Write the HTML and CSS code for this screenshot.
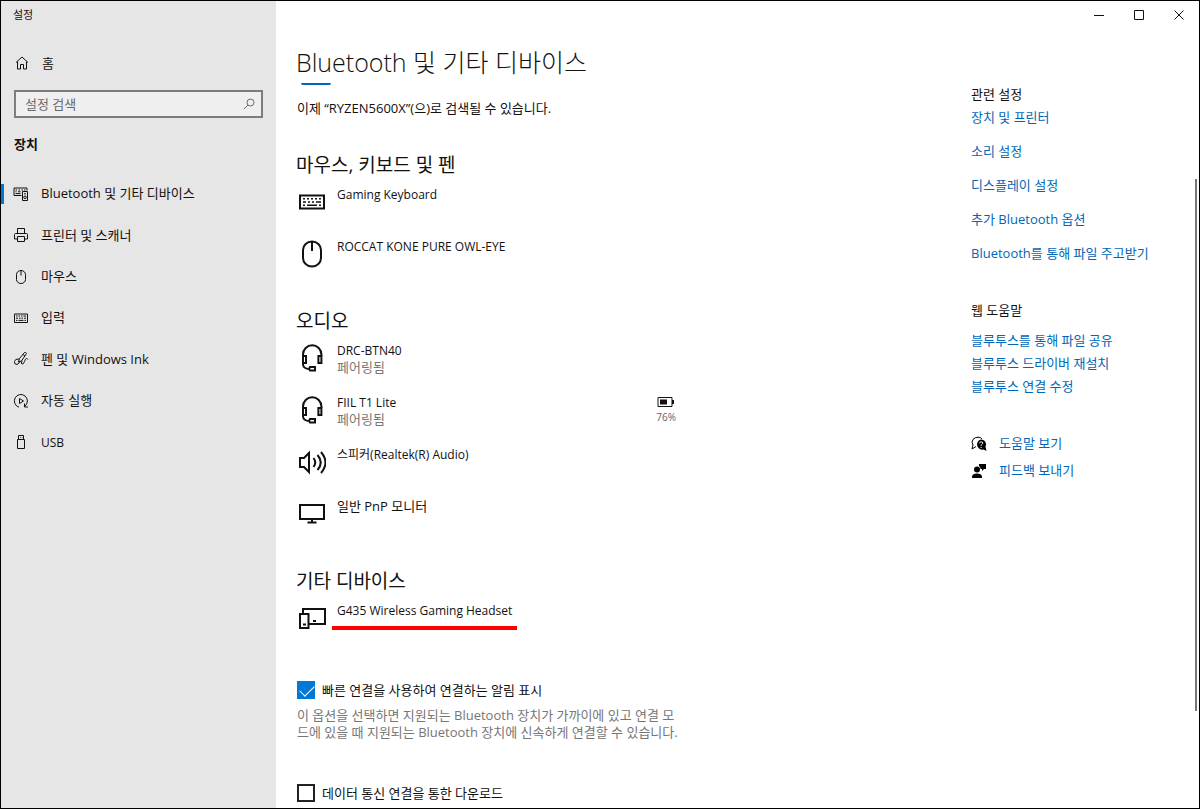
FILE: index.html
```
<!DOCTYPE html>
<html lang="ko">
<head>
  <meta charset="UTF-8">
  <meta name="viewport" content="width=device-width, initial-scale=1.0">
  <title>설정</title>
  <link rel="stylesheet" href="styles.css">
</head>
<body>
  <!-- Shared icons -->
  <svg class="sprite" aria-hidden="true">
    <symbol id="headset" viewBox="0 0 28 32">
      <path d="M5 14v-1.500a9.200 9.200 0 0 1 18.400 0V14M5 21v1.500q.5 4 5.500 4.500"/>
      <path d="M5 14h3v7H5zM20.400 14h3v7h-3zM12 25h5v3.500h-5l-1-1.500z"/>
    </symbol>
  </svg>

  <div class="window">
    <!-- Sidebar -->
    <aside class="sidebar">
      <div class="app-title">설정</div>
      <a class="home" href="#">
        <svg class="nav-icon" viewBox="0 0 16 16"><path d="M2 7.500 8 2l6 5.500M3.500 6.500V14h3V9.500h3V14h3V6.500"/></svg>
        <span>홈</span>
      </a>
      <div class="search">
        <input type="text" placeholder="설정 검색" aria-label="설정 검색">
        <svg viewBox="0 0 12 12"><circle cx="7.500" cy="4.500" r="3.500"/><path d="M5 7 1 11"/></svg>
      </div>
      <h2 class="sidebar-heading">장치</h2>
      <nav class="nav">
        <a class="nav-item active" href="#">
          <svg class="nav-icon" viewBox="0 0 16 16"><path d="M8.500 9.500H1V2h13v2.500M2.500 4h1.500M5.500 4H7M8.500 4H10M11 4h1.500M2.500 5.800h1M5 5.800h2.500M2.500 7.600h5"/><path d="M9.500 5.500h5v9h-5z"/><circle cx="12" cy="11.300" r="1.300"/><path d="M11 7.800h2"/></svg>
          <span>Bluetooth 및 기타 디바이스</span>
        </a>
        <a class="nav-item" href="#">
          <svg class="nav-icon" viewBox="0 0 16 16"><path d="M4.500 6.500v-5h7v5M4 12H1.500V7.500q0-1 1-1h11q1 0 1 1V12H12M4.500 9.500h7v5h-7z"/></svg>
          <span>프린터 및 스캐너</span>
        </a>
        <a class="nav-item" href="#">
          <svg class="nav-icon" viewBox="0 0 16 16"><path d="M3.500 5.500a4.500 4 0 0 1 9 0v5a4.500 4 0 0 1-9 0zM8 1.500v5"/></svg>
          <span>마우스</span>
        </a>
        <a class="nav-item" href="#">
          <svg class="nav-icon" viewBox="0 0 16 16"><path d="M1.500 4h13v8.500h-13zM3 6h1.500M5.500 6H7M8 6h1.500M10.500 6H13M3 8.200h2M6 8.200h1.500M8.500 8.200H10M11 8.200h2M3 10.400h1.500M5.500 10.400h5M11.500 10.400H13"/></svg>
          <span>입력</span>
        </a>
        <a class="nav-item" href="#">
          <svg class="nav-icon" viewBox="0 0 16 16"><path d="m5.500 11 1-3.500 5-6q1.500-.5 2 1L8.500 10zM10 3.500l2 1.500M6 8Q2 7.500 1.500 10.500T4 13.500q2-.5 3-3.500M9 10q-1.500 2.500 0 3t2.500-2.500 2-3T15 8.500"/></svg>
          <span>펜 및 Windows Ink</span>
        </a>
        <a class="nav-item" href="#">
          <svg class="nav-icon" viewBox="0 0 16 16"><path d="M6 14.200A6.500 6.500 0 1 1 12 13M11.500 10.500V14H15M6.500 5.500v5l4-2.500z"/></svg>
          <span>자동 실행</span>
        </a>
        <a class="nav-item" href="#">
          <svg class="nav-icon" viewBox="0 0 16 16"><path d="M5.500 5.500v-4h5v4M4.500 5.500h7v9h-7zM7 3.500h.500M8.800 3.500h.500"/></svg>
          <span class="latin">USB</span>
        </a>
      </nav>
    </aside>

    <div class="page">
      <div class="window-controls">
        <button type="button" aria-label="최소화"><svg viewBox="0 0 10 10"><path d="M0 5.500h10"/></svg></button>
        <button type="button" aria-label="최대화"><svg viewBox="0 0 10 10"><path d="M.5.5h9v9h-9z"/></svg></button>
        <button type="button" aria-label="닫기"><svg viewBox="0 0 10 10"><path d="m.5.500 9 9M9.500.5l-9 9"/></svg></button>
      </div>

      <div class="columns">
        <main class="main">
          <h1>Bluetooth 및 기타 디바이스</h1>
          <div class="add-device"></div>
          <p class="discover">이제 “RYZEN5600X”(으)로 검색될 수 있습니다.</p>

          <section class="group">
            <h2>마우스, 키보드 및 펜</h2>
            <ul>
              <li class="device">
                <svg class="device-icon" viewBox="0 0 28 32"><path d="M2 9.500h24v13H2z"/><path class="thin" d="M5 12.700h2M9 12.700h2M13 12.700h2M17 12.700h2M21 12.700h2M5 16h3M10 16h2M14 16h2M18 16h5M5 19.300h2M9 19.300h10M21 19.300h2"/></svg>
                <div class="device-text"><span class="latin">Gaming Keyboard</span></div>
              </li>
              <li class="device">
                <svg class="device-icon" viewBox="0 0 28 32"><path d="M5 12a9 8.500 0 0 1 18 0v8a9 8.500 0 0 1-18 0zM14 4v9"/></svg>
                <div class="device-text"><span class="latin">ROCCAT KONE PURE OWL-EYE</span></div>
              </li>
            </ul>
          </section>

          <section class="group">
            <h2>오디오</h2>
            <ul>
              <li class="device">
                <svg class="device-icon" viewBox="0 0 28 32"><use href="#headset"/></svg>
                <div class="device-text"><span class="latin">DRC-BTN40</span><span class="status">페어링됨</span></div>
              </li>
              <li class="device">
                <svg class="device-icon" viewBox="0 0 28 32"><use href="#headset"/></svg>
                <div class="device-text"><span class="latin">FIIL T1 Lite</span><span class="status">페어링됨</span></div>
                <div class="battery">
                  <svg viewBox="0 0 18 12"><path d="M1 1.500h14v9H1z"/><path class="fill" d="M3 3.500h7v5H3zM15 4h2v4h-2z"/></svg>
                  <span>76%</span>
                </div>
              </li>
              <li class="device">
                <svg class="device-icon" viewBox="0 0 28 32"><path d="M2 12h4l5-5v19l-5-5H2zM15.500 12q3.500 4.500 0 9M19.500 9q6.500 7.500 0 15M23 6q9 10.500 0 21"/></svg>
                <div class="device-text"><span class="latin">스피커(Realtek(R) Audio)</span></div>
              </li>
              <li class="device">
                <svg class="device-icon" viewBox="0 0 28 32"><path d="M2 7h24v14H2zM14 21v3.500M9.500 24.500h9"/></svg>
                <div class="device-text"><span>일반 PnP 모니터</span></div>
              </li>
            </ul>
          </section>

          <section class="group">
            <h2>기타 디바이스</h2>
            <ul>
              <li class="device">
                <svg class="device-icon" viewBox="0 0 28 32"><path d="M5 11V7h22v15H11M2 12h8.500v14H2zM5 22.500h3M15 19h3"/></svg>
                <div class="device-text"><span class="latin marked">G435 Wireless Gaming Headset</span></div>
              </li>
            </ul>
          </section>

          <div class="options">
            <label class="check"><input type="checkbox" checked><span>빠른 연결을 사용하여 연결하는 알림 표시</span></label>
            <p class="hint">이 옵션을 선택하면 지원되는 Bluetooth 장치가 가까이에 있고 연결 모<br>드에 있을 때 지원되는 Bluetooth 장치에 신속하게 연결할 수 있습니다.</p>
            <label class="check"><input type="checkbox"><span>데이터 통신 연결을 통한 다운로드</span></label>
          </div>
        </main>

        <aside class="related">
          <h3>관련 설정</h3>
          <ul class="settings-links">
            <li><a href="#">장치 및 프린터</a></li>
            <li><a href="#">소리 설정</a></li>
            <li><a href="#">디스플레이 설정</a></li>
            <li><a href="#">추가 Bluetooth 옵션</a></li>
            <li><a href="#">Bluetooth를 통해 파일 주고받기</a></li>
          </ul>
          <h3>웹 도움말</h3>
          <ul class="help-links">
            <li><a href="#">블루투스를 통해 파일 공유</a></li>
            <li><a href="#">블루투스 드라이버 재설치</a></li>
            <li><a href="#">블루투스 연결 수정</a></li>
          </ul>
          <ul class="support-links">
            <li>
              <svg viewBox="0 0 16 16"><path class="line" d="M5 10.500 1 13l1-4Q0 6 2 3.500T7 1.200Q9.500 1 11 3"/><path d="M10 3.500a5 5 0 0 1 4.500 7.200l1 4.300-3-1.500A5 5 0 1 1 10 3.500z"/><path class="mark" d="M8.500 7.300q.2-1.500 1.700-1.500t1.600 1.300q0 .8-.9 1.300t-.8 1.400M10.100 11v1"/></svg>
              <a href="#">도움말 보기</a>
            </li>
            <li>
              <svg viewBox="0 0 16 16"><circle cx="6" cy="6.500" r="3"/><path d="M1 15v-1.500Q1.500 10.500 6 10.500t5 3V15zM8 1h7v5h-2l-2 2V6H9.500Q9.500 4 8 3z"/></svg>
              <a href="#">피드백 보내기</a>
            </li>
          </ul>
        </aside>
      </div>
      <div class="scroll-thumb"></div>
    </div>
  </div>
</body>
</html>
```
FILE: styles.css
```
* {
  box-sizing: border-box;
}
body {
  margin: 0;
  font-family: "Open Sans", "Noto Sans CJK KR", sans-serif;
  font-size: 13px;
  line-height: 17px;
  color: #111;
}
h1, h2, h3, p, ul {
  margin: 0;
  padding: 0;
}
ul {
  list-style: none;
}
a {
  color: #0067b8;
  text-decoration: none;
}
svg {
  flex: none;
  fill: none;
  stroke: #111;
}
.sprite {
  position: absolute;
  width: 0;
  height: 0;
}
.latin {
  font-size: 12px;
}
.window {
  display: flex;
  height: 100vh;
  border: 1px solid #000;
  overflow: hidden;
  background: #fff;
}

/* Sidebar */
.sidebar {
  flex: none;
  width: 275px;
  background: #e6e6e6;
}
.sidebar a {
  color: #111;
}
.app-title {
  padding: 5px 12px;
  font-size: 11px;
}
.home {
  display: flex;
  align-items: center;
  gap: 12px;
  height: 34px;
  margin-top: 18px;
  padding-left: 13px;
}
.nav-icon {
  width: 16px;
  height: 16px;
}
.search {
  display: flex;
  align-items: center;
  height: 28px;
  margin: 10px 13px 0;
  padding: 0 6px 0 9px;
  border: 2px solid #7d7d7d;
  background: #efefef;
}
.search input {
  flex: 1;
  min-width: 0;
  padding: 0;
  border: none;
  outline: none;
  background: none;
  font: inherit;
}
.search input::placeholder {
  color: #6a6a6a;
}
.search svg {
  width: 12px;
  height: 12px;
  stroke: #6a6a6a;
}
.sidebar-heading {
  padding: 18px 13px 0;
  font-size: 13px;
  line-height: 17px;
}
.nav {
  display: flex;
  flex-direction: column;
  height: 290px;
  margin-top: 20px;
}
.nav-item {
  display: flex;
  flex: 1;
  align-items: center;
  gap: 12px;
}
.nav-item::before {
  content: "";
  width: 3px;
  height: 20px;
  margin-right: -3px;
}
.nav-item.active::before {
  background: #0078d7;
}

/* Page */
.page {
  position: relative;
  flex: 1;
  min-width: 0;
}
.window-controls {
  display: flex;
  justify-content: flex-end;
}
.window-controls button {
  display: flex;
  align-items: center;
  justify-content: center;
  width: 40px;
  height: 27px;
  padding: 0;
  border: none;
  background: none;
}
.window-controls svg {
  width: 10px;
  height: 10px;
}
.columns {
  display: flex;
  justify-content: space-between;
}
.main {
  flex: 0 1 410px;
  padding: 16px 0 0 20px;
}
h1 {
  font-size: 25px;
  font-weight: 300;
  line-height: 36px;
}
.add-device {
  width: 30px;
  height: 2px;
  margin: 3px 0 0 5px;
  border-radius: 0 0 4px 4px;
  background: #0067b8;
}
.discover {
  margin: 15px 0 36px 1px;
}
.group {
  margin-bottom: 19px;
}
.group h2 {
  padding-bottom: 9px;
  font-size: 19px;
  font-weight: 400;
  line-height: 24px;
}
.device {
  display: flex;
  height: 52px;
}
.device-icon {
  width: 28px;
  height: 32px;
  margin-left: 2px;
  stroke-width: 2;
}
.device-icon .thin {
  stroke-width: 1.6;
}
.device-text {
  display: flex;
  flex: 1;
  flex-direction: column;
  align-items: flex-start;
  padding-left: 11px;
}
.status {
  color: #767676;
}
.marked {
  margin-left: -5px;
  padding: 0 5px 7px;
  border-bottom: 4px solid #f00;
}
.battery {
  display: flex;
  flex-direction: column;
  align-items: center;
  gap: 1px;
  margin-right: 10px;
  padding-top: 2px;
  font-size: 10px;
  line-height: 16px;
  color: #666;
}
.battery svg {
  width: 18px;
  height: 12px;
}
.battery .fill {
  fill: #111;
  stroke: none;
}
.options {
  padding-top: 8px;
}
.check {
  display: flex;
  align-items: center;
  gap: 7px;
}
.check input {
  appearance: none;
  width: 18px;
  height: 18px;
  margin: 0 0 0 1px;
  border: 2px solid #222;
  background: #fff;
}
.check input:checked {
  border: none;
  background: #0078d7;
}
.check input:checked::before {
  content: "";
  display: block;
  width: 13px;
  height: 7px;
  margin: 4px 0 0 3px;
  border: solid #fff;
  border-width: 0 0 1px 1px;
  transform: rotate(-45deg);
}
.hint {
  margin: 8px 0 43px 1px;
  color: #767676;
  white-space: nowrap;
}

/* Related links */
.related {
  flex: none;
  width: 228px;
  padding-top: 58px;
}
.related h3 {
  font-size: 13px;
  font-weight: 400;
}
.settings-links {
  display: grid;
  gap: 17px;
  margin: 6px 0 40px;
}
.help-links {
  display: grid;
  gap: 6px;
  margin: 13px 0 40px;
}
.support-links {
  display: grid;
  gap: 10px;
}
.support-links li {
  display: flex;
  align-items: center;
  gap: 12px;
}
.support-links svg {
  width: 16px;
  height: 16px;
  fill: #000;
  stroke: none;
}
.support-links .line {
  fill: none;
  stroke: #000;
}
.support-links .mark {
  fill: none;
  stroke: #fff;
}
.scroll-thumb {
  position: absolute;
  top: 22%;
  right: 2px;
  width: 2px;
  height: 66%;
  background: #777;
}
```
